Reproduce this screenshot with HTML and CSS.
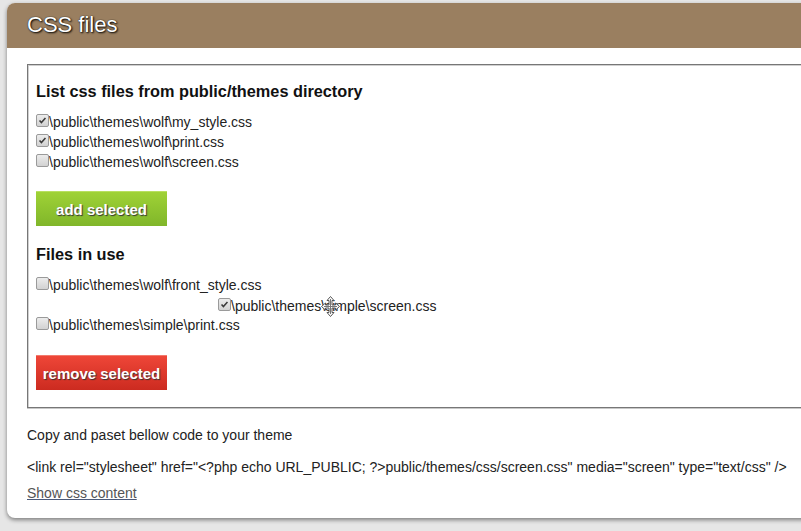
FILE: index.html
```html
<!DOCTYPE html>
<html>
<head>
<meta charset="utf-8">
<link rel="stylesheet" href="styles.css">
</head>
<body>
<div class="panel">
  <div class="panel-head"><h2>CSS files</h2></div>
  <div class="panel-body">
    <div class="box">
      <h3>List css files from public/themes directory</h3>
      <ul class="files">
        <li><span class="cb on"><svg viewBox="0 0 13 13" width="13" height="13"><path d="M3 6.5 L5.2 9 L10 3.5" fill="none" stroke="#3a3a3a" stroke-width="1.8"/></svg></span>\public\themes\wolf\my_style.css</li>
        <li><span class="cb on"><svg viewBox="0 0 13 13" width="13" height="13"><path d="M3 6.5 L5.2 9 L10 3.5" fill="none" stroke="#3a3a3a" stroke-width="1.8"/></svg></span>\public\themes\wolf\print.css</li>
        <li><span class="cb"></span>\public\themes\wolf\screen.css</li>
      </ul>
      <button class="btn btn-green">add selected</button>
      <h3 class="second">Files in use</h3>
      <ul class="files">
        <li><span class="cb"></span>\public\themes\wolf\front_style.css</li>
        <li class="indent"><span class="cb on"><svg viewBox="0 0 13 13" width="13" height="13"><path d="M3 6.5 L5.2 9 L10 3.5" fill="none" stroke="#3a3a3a" stroke-width="1.8"/></svg></span>\public\themes\simple\screen.css</li>
        <li><span class="cb"></span>\public\themes\simple\print.css</li>
      </ul>
      <button class="btn btn-red">remove selected</button>
    </div>
    <p class="note">Copy and paset bellow code to your theme</p>
    <p class="code">&lt;link rel="stylesheet" href="&lt;?php echo URL_PUBLIC; ?&gt;public/themes/css/screen.css" media="screen" type="text/css" /&gt;</p>
    <a class="show" href="#">Show css content</a>
  </div>
</div>
<svg class="cursor" width="19" height="21" viewBox="0 0 19 21">
  <path d="M9.5 0.5 L13 4.5 L11 4.5 L11 9 L14.5 9 L14.5 7 L18.5 10.5 L14.5 14 L14.5 12 L11 12 L11 16.5 L13 16.5 L9.5 20.5 L6 16.5 L8 16.5 L8 12 L4.5 12 L4.5 14 L0.5 10.5 L4.5 7 L4.5 9 L8 9 L8 4.5 L6 4.5 Z" fill="#fff" stroke="#555" stroke-width="1"/>
  <path d="M9.5 3 L9.5 18 M3 10.5 L16 10.5" stroke="#777" stroke-width="1"/>
</svg>
</body>
</html>
```

FILE: styles.css
```css
html, body {
  margin: 0;
  padding: 0;
}
body {
  background: #e6e6e6;
  font-family: "Liberation Sans", Arial, sans-serif;
  color: #1a1a1a;
  width: 801px;
  height: 531px;
  overflow: hidden;
  position: relative;
}
.panel {
  margin: 3px 0 0 7px;
  width: 820px;
  background: #fff;
  border-radius: 8px 0 0 8px;
  box-shadow: 0 2px 4px rgba(0,0,0,0.45);
}
.panel-head {
  background: #9a7f60;
  height: 45px;
  border-radius: 8px 0 0 0;
  display: flex;
  align-items: center;
  padding-left: 20px;
}
.panel-head h2 {
  margin: 0;
  font-size: 22px;
  font-weight: normal;
  color: #fff;
  text-shadow: 1px 1px 2px #000, 0 0 1px #000;
  position: relative;
  top: -1px;
}
.panel-body {
  padding: 16px 0 16px 20px;
}
.box {
  border: 1px solid #777;
  border-right: none;
  box-shadow: inset 1px 1px 0 #d0d0d0, 0 1px 0 #c8c8c8;
  padding: 16px 0 17px 8px;
}
h3 {
  margin: 0 0 11px 0;
  font-size: 16.3px;
  font-weight: bold;
  color: #111;
  line-height: 20px;
}
h3.second {
  margin-top: 18px;
}
.files {
  list-style: none;
  margin: 0;
  padding: 0;
}
.files li {
  display: flex;
  align-items: center;
  height: 20px;
  font-size: 14px;
  color: #222;
}
.files li.indent {
  margin-left: 182px;
  position: relative;
  top: 1px;
}
.cb {
  width: 11px;
  height: 11px;
  border: 1px solid #9a9a9a;
  border-radius: 2px;
  background: linear-gradient(#ececec, #d2d2d2);
  position: relative;
  top: -2px;
  flex: none;
  display: flex;
  align-items: center;
  justify-content: center;
}
.cb svg {
  width: 11px;
  height: 11px;
}
.btn {
  display: block;
  width: 131px;
  height: 35px;
  border: none;
  margin: 19px 0 0 0;
  padding: 0;
  font-family: "Liberation Sans", Arial, sans-serif;
  font-size: 15px;
  font-weight: bold;
  color: #fff;
  text-shadow: 1px 1px 1px #333;
}
.btn-green {
  background: linear-gradient(#9fd236, #80b62a);
  border-top: 1px solid #b8e060;
}
.btn-red {
  background: linear-gradient(#ee4638, #cc2b20);
  border-top: 1px solid #f27a6d;
  margin-top: 20px;
}
.note {
  margin: 19px 0 0 0;
  font-size: 14px;
  color: #222;
  line-height: 16px;
}
.code {
  margin: 16px 0 0 0;
  font-size: 14px;
  color: #222;
  line-height: 16px;
  white-space: nowrap;
}
.show {
  display: inline-block;
  margin-top: 10px;
  font-size: 14px;
  color: #555;
  text-decoration-color: #4b5a7a;
  line-height: 16px;
}
.cursor {
  position: absolute;
  left: 321px;
  top: 296px;
}
```
